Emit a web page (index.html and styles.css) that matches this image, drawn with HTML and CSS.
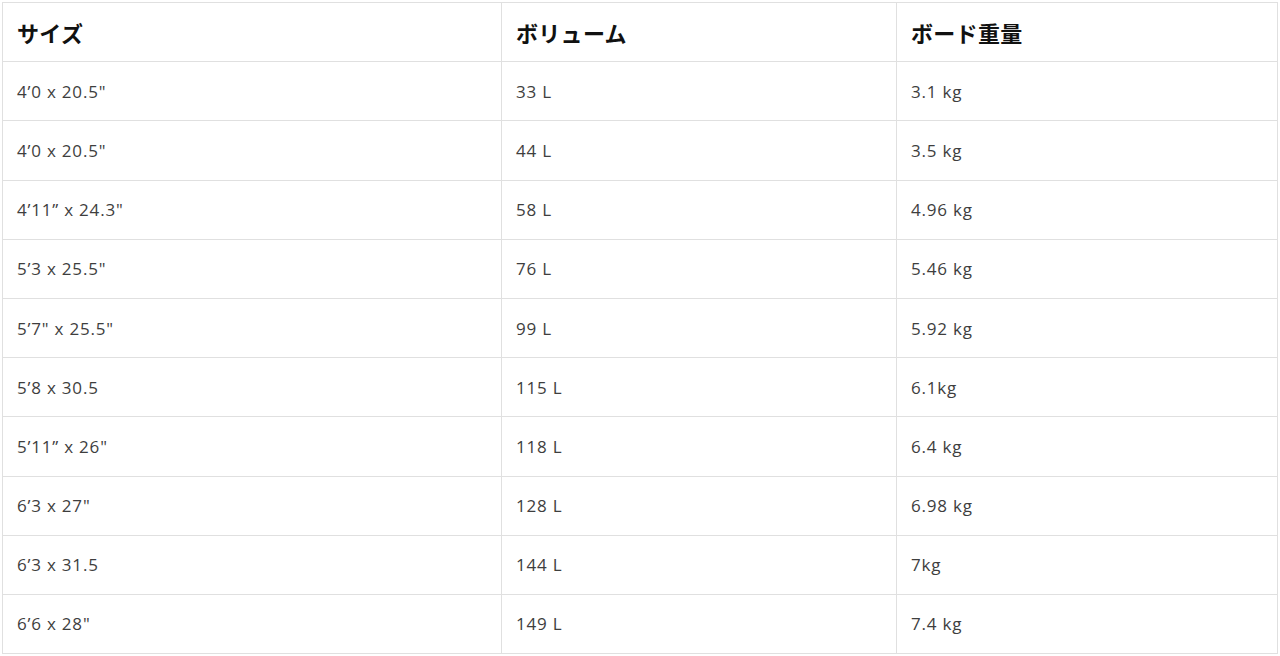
FILE: index.html
```html
<!DOCTYPE html>
<html lang="ja">
<head>
<meta charset="utf-8">
<link rel="stylesheet" href="styles.css">
</head>
<body>
<div class="wrap">
<table class="spec">
  <colgroup>
    <col class="c1"><col class="c2"><col class="c3">
  </colgroup>
  <thead>
    <tr><th>サイズ</th><th>ボリューム</th><th>ボード重量</th></tr>
  </thead>
  <tbody>
    <tr><td>4’0 x 20.5"</td><td>33 L</td><td>3.1 kg</td></tr>
    <tr><td>4’0 x 20.5"</td><td>44 L</td><td>3.5 kg</td></tr>
    <tr><td>4’11” x 24.3"</td><td>58 L</td><td>4.96 kg</td></tr>
    <tr><td>5’3 x 25.5"</td><td>76 L</td><td>5.46 kg</td></tr>
    <tr><td>5’7" x 25.5"</td><td>99 L</td><td>5.92 kg</td></tr>
    <tr><td>5’8 x 30.5</td><td>115 L</td><td>6.1kg</td></tr>
    <tr><td>5’11” x 26"</td><td>118 L</td><td>6.4 kg</td></tr>
    <tr><td>6’3 x 27"</td><td>128 L</td><td>6.98 kg</td></tr>
    <tr><td>6’3 x 31.5</td><td>144 L</td><td>7kg</td></tr>
    <tr><td>6’6 x 28"</td><td>149 L</td><td>7.4 kg</td></tr>
  </tbody>
</table>
</div>
</body>
</html>
```
FILE: styles.css
```css
html, body {
  margin: 0;
  padding: 0;
  background: #fff;
}
.wrap {
  padding: 2px 2px 0 2px;
}
.spec {
  width: 100%;
  border-collapse: collapse;
  table-layout: fixed;
  font-family: "Open Sans", "Noto Sans CJK JP", sans-serif;
}
.c1 { width: 499px; }
.c2 { width: 395px; }
.spec th, .spec td {
  border: 1px solid #e0e0e0;
  text-align: left;
  vertical-align: middle;
  padding: 0 14px;
  height: 58.2px;
}
.spec th {
  font-family: "Noto Sans CJK JP", sans-serif;
  font-weight: 700;
  font-size: 22px;
  color: #111;
  letter-spacing: 0.3px;
}
.spec td {
  font-size: 17px;
  color: #3e3e3e;
  letter-spacing: 0.8px;
}
```
